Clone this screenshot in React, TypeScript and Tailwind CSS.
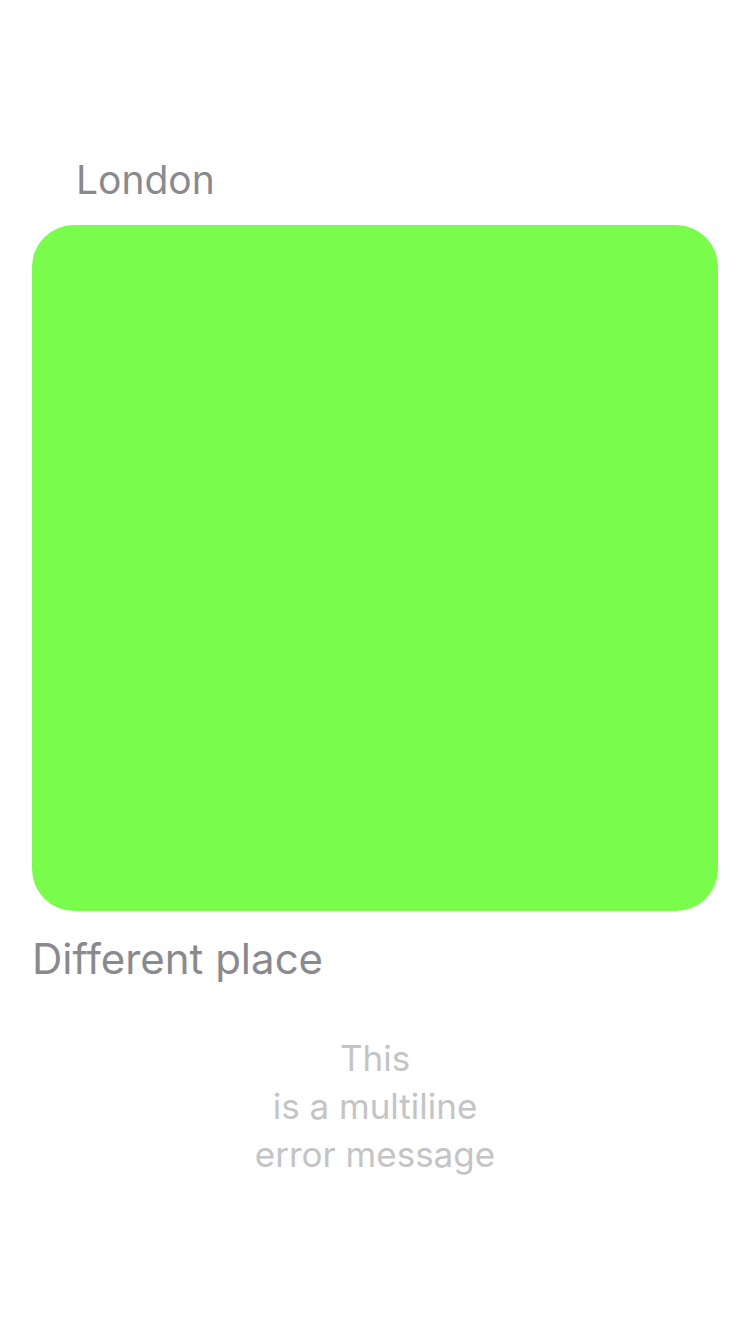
export default function App() {
  return (
    <div className="w-[750px] h-[1334px] bg-white flex flex-col" style={{ fontFamily: 'Inter, "Noto Sans", sans-serif' }}>
      <div className="pt-[156px] pl-[76px] text-[39px] leading-[48px] text-[#8a8a8e]">London</div>
      <div className="mt-[21px] ml-[32px] w-[686px] h-[686px] rounded-[42px] bg-[#7afc4c]" />
      <div className="mt-[23px] pl-[32px] text-[42px] leading-[50px] text-[#8a8a8e]">Different place</div>
      <div className="mt-[50px] text-center text-[35px] leading-[48px] text-[#c4c4c6]">
        <div>This</div>
        <div>is a multiline</div>
        <div>error message</div>
      </div>
    </div>
  );
}
